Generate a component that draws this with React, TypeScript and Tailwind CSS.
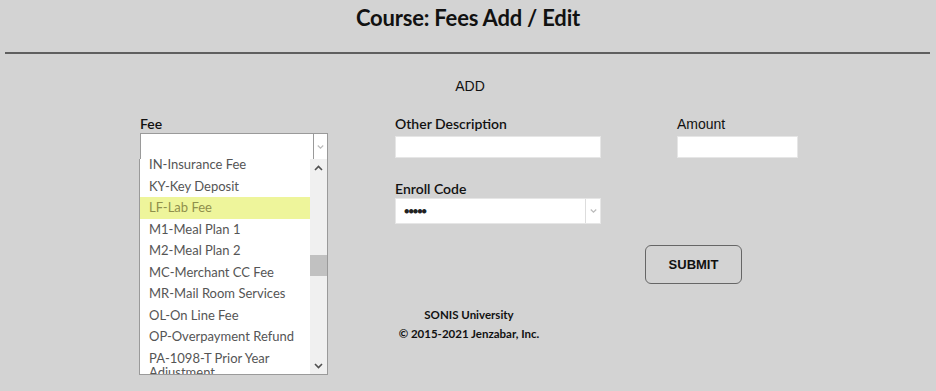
import { useState } from "react";

const fees = [
  "IN-Insurance Fee",
  "KY-Key Deposit",
  "LF-Lab Fee",
  "M1-Meal Plan 1",
  "M2-Meal Plan 2",
  "MC-Merchant CC Fee",
  "MR-Mail Room Services",
  "OL-On Line Fee",
  "OP-Overpayment Refund",
  "PA-1098-T Prior Year Adjustment",
];

function Chevron({ up = false, className = "" }: { up?: boolean; className?: string }) {
  return (
    <svg width="9" height="6" viewBox="0 0 9 6" className={className} fill="none" stroke="currentColor" strokeWidth="1.6">
      <path d={up ? "M1 5l3.5-3.5L8 5" : "M1 1l3.5 3.5L8 1"} />
    </svg>
  );
}

export default function App() {
  const [selected] = useState("LF-Lab Fee");

  return (
    <div className="w-[936px] h-[391px] bg-[#d3d3d3] overflow-hidden font-['Lato',sans-serif] text-[#111]">
      {/* Header */}
      <div className="pt-[3px] h-[52px] text-center">
        <h1 className="text-[22px] leading-[30px] font-bold tracking-[-0.2px]">Course: Fees Add / Edit</h1>
      </div>
      <div className="ml-[5px] mr-[6px] h-[2px] bg-[#5f5f5f]" />

      <p className="mt-[22px] text-center text-[14px] leading-[20px] font-['Liberation_Sans',sans-serif] pl-[4px]">ADD</p>

      {/* Form */}
      <div className="mt-[18px] flex pl-[139px]">
        {/* Fee */}
        <div className="w-[189px] relative">
          <label className="block pl-[1px] text-[14px] leading-[19px] font-semibold">Fee</label>
          <div className="ml-[1px] h-[27px] bg-white border border-[#9a9a9a] flex">
            <div className="flex-1" />
            <div className="w-[14px] border-l border-[#9a9a9a] flex items-center justify-center text-[#bbb]">
              <Chevron className="w-[7px]" />
            </div>
          </div>

          {/* Open list */}
          <div className="absolute left-0 top-[45px] w-[189px] h-[216px] bg-white border border-t-0 border-[#9a9a9a] flex overflow-hidden">
            <div className="flex-1 overflow-hidden">
              <ul className="-mt-[5px]">
                {fees.map((f) => (
                  <li
                    key={f}
                    className={`pl-[9px] pr-1 text-[13px] ${
                      f === "PA-1098-T Prior Year Adjustment" ? "leading-[14px] pt-[3px]" : "h-[21.5px] leading-[21.5px]"
                    } ${f === selected ? "bg-[#eef59b] text-[#8e8f4c]" : "text-[#555]"}`}
                  >
                    {f}
                  </li>
                ))}
              </ul>
            </div>
            <div className="w-[17px] bg-[#f0f0f0] flex flex-col items-center">
              <div className="h-[17px] flex items-center justify-center text-[#505050]">
                <Chevron up />
              </div>
              <div className="flex-1 w-full flex flex-col">
                <div className="h-[79px]" />
                <div className="h-[21px] bg-[#c1c1c1] w-full" />
              </div>
              <div className="h-[17px] flex items-center justify-center text-[#505050]">
                <Chevron />
              </div>
            </div>
          </div>
        </div>

        {/* Other description + enroll + submit */}
        <div className="ml-[67px]">
          <div className="flex">
            <div className="w-[206px]">
              <label className="block text-[14px] leading-[19px] font-semibold">Other Description</label>
              <input className="mt-[3px] block w-[206px] h-[22px] bg-white border border-[#e6e6e6] outline-none" />
              <label className="block mt-[21px] text-[14px] leading-[19px] font-semibold">Enroll Code</label>
              <div className="h-[26px] bg-white border border-[#e6e6e6] flex">
                <div className="flex-1 pl-[8px] flex items-center text-[#222] text-[9px] tracking-[-1px]">●●●●●</div>
                <div className="w-[15px] border-l border-[#ddd] flex items-center justify-center text-[#bbb]">
                  <Chevron className="w-[7px]" />
                </div>
              </div>
            </div>
            <div className="ml-[76px] w-[121px]">
              <label className="block mt-[1px] text-[14px] leading-[19px] font-['Liberation_Sans',sans-serif]">Amount</label>
              <input className="mt-[2px] block w-[121px] h-[22px] bg-white border border-[#e6e6e6] outline-none" />
            </div>
          </div>
          <div className="mt-[21px] pl-[250px]">
            <button className="w-[97px] h-[39px] rounded-[6px] border border-[#666] text-[13px] font-bold font-['Liberation_Sans',sans-serif] text-[#111]">
              SUBMIT
            </button>
          </div>
        </div>
      </div>

      {/* Footer */}
      <div className="mt-[21px] text-center text-[11.5px] font-bold leading-[19px] pl-[2px]">
        <p>SONIS University</p>
        <p>© 2015-2021 Jenzabar, Inc.</p>
      </div>
    </div>
  );
}
